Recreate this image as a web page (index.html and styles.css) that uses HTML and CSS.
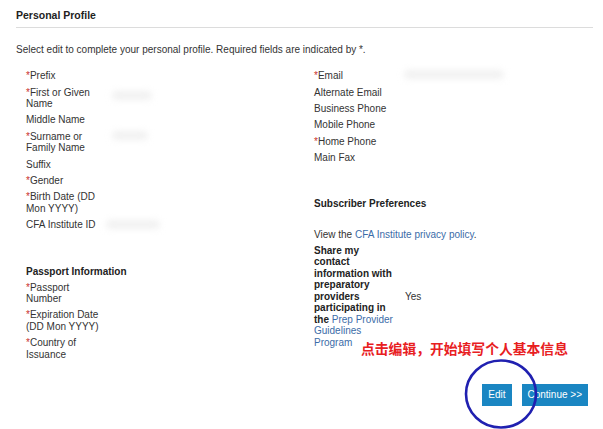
FILE: index.html
```html
<!DOCTYPE html>
<html lang="en">
<head>
<meta charset="utf-8">
<title>Personal Profile</title>
<link rel="stylesheet" href="styles.css">
</head>
<body>
<div class="page">
  <h1 class="title">Personal Profile</h1>
  <p class="intro">Select edit to complete your personal profile. Required fields are indicated by *.</p>

  <div class="columns">
    <div class="col col-left">
      <div class="fields">
        <div class="row"><div class="label req">Prefix</div><div class="value"></div></div>
        <div class="row"><div class="label req">First or Given Name</div><div class="value"><span class="smudge smudge-name"></span></div></div>
        <div class="row"><div class="label">Middle Name</div><div class="value"></div></div>
        <div class="row"><div class="label req">Surname or Family Name</div><div class="value"><span class="smudge smudge-surname"></span></div></div>
        <div class="row"><div class="label">Suffix</div><div class="value"></div></div>
        <div class="row"><div class="label req">Gender</div><div class="value"></div></div>
        <div class="row"><div class="label req">Birth Date (DD Mon YYYY)</div><div class="value"></div></div>
        <div class="row"><div class="label">CFA Institute ID</div><div class="value"><span class="smudge smudge-id"></span></div></div>
      </div>

      <h2 class="section section-passport">Passport Information</h2>
      <div class="fields">
        <div class="row"><div class="label req">Passport Number</div><div class="value"></div></div>
        <div class="row"><div class="label req">Expiration Date (DD Mon YYYY)</div><div class="value"></div></div>
        <div class="row"><div class="label req">Country of Issuance</div><div class="value"></div></div>
      </div>
    </div>

    <div class="col col-right">
      <div class="fields fields-contact">
        <div class="row"><div class="label req">Email</div><div class="value"><span class="smudge smudge-email"></span></div></div>
        <div class="row"><div class="label">Alternate Email</div><div class="value"></div></div>
        <div class="row"><div class="label">Business Phone</div><div class="value"></div></div>
        <div class="row"><div class="label">Mobile Phone</div><div class="value"></div></div>
        <div class="row"><div class="label req">Home Phone</div><div class="value"></div></div>
        <div class="row"><div class="label">Main Fax</div><div class="value"></div></div>
      </div>

      <h2 class="section section-subscriber">Subscriber Preferences</h2>
      <p class="privacy">View the <a class="link" href="#">CFA Institute privacy policy</a>.</p>
      <div class="share">
        <div class="share-label"><span>Share my contact information with preparatory providers participating in</span> <span>the</span> <a class="link" href="#"><span>Prep Provider</span> <span>Guidelines</span> <span>Program</span></a></div>
        <div class="share-value">Yes</div>
      </div>
    </div>
  </div>

  <div class="actions">
    <button class="btn" type="button">Edit</button>
    <button class="btn" type="button">Continue &gt;&gt;</button>
  </div>

  <div class="annotation">点击编辑，开始填写个人基本信息</div>
  <svg class="circle" width="80" height="76" viewBox="0 0 80 76" aria-hidden="true">
    <ellipse cx="40" cy="38" rx="35" ry="33.5" fill="none" stroke="#2020b0" stroke-width="2.6"/>
  </svg>
</div>
</body>
</html>
```

FILE: styles.css
```css
html, body {
  margin: 0;
  padding: 0;
  background: #ffffff;
}

body {
  font-family: "Liberation Sans", Arial, sans-serif;
  font-size: 10px;
  color: #333333;
  overflow: hidden;
}

.page {
  position: relative;
  width: 603px;
  height: 429px;
}

.title {
  margin: 0 10px 0 16px;
  padding: 9px 0 6px 0;
  font-size: 10.5px;
  line-height: 12px;
  font-weight: bold;
  color: #222222;
  border-bottom: 1px solid #dcdcdc;
}

.intro {
  margin: 16px 0 12px 16px;
  line-height: 12px;
  color: #333333;
}

.columns {
  display: grid;
  grid-template-columns: 288px 1fr;
  padding-left: 26px;
}

.fields {
  display: flex;
  flex-direction: column;
}

.row {
  display: grid;
  grid-template-columns: 76px 1fr;
  column-gap: 10px;
  padding: 2.4px 0;
  line-height: 11.5px;
}

.fields-contact .row {
  grid-template-columns: 80px 1fr;
}

.label.req::before {
  content: "*";
  color: #c9302c;
}

.value {
  position: relative;
}

.smudge {
  display: block;
  height: 9px;
  margin-top: 3px;
  background: #f1f1f1;
  border-radius: 5px;
  filter: blur(3px);
}

.smudge-name { width: 40px; margin-top: 4px; }
.smudge-surname { width: 36px; margin-top: 0; }
.smudge-id { width: 54px; margin-left: -6px; margin-top: 1px; }
.smudge-email { width: 100px; margin-top: 0; }

.section {
  margin: 0;
  font-size: 10px;
  line-height: 11.5px;
  font-weight: bold;
  color: #222222;
}

.section-passport {
  margin-top: 33px;
  margin-bottom: 2px;
}

.section-subscriber {
  margin-top: 32.5px;
}

.privacy {
  margin: 19.5px 0 2px 0;
  line-height: 11.5px;
}

.link {
  color: #3b6ca8;
  text-decoration: none;
  font-weight: normal;
}

.share {
  display: grid;
  grid-template-columns: 80.5px 1fr;
  column-gap: 10.5px;
  align-items: center;
  padding: 2.2px 0;
}

.share-label {
  font-weight: bold;
  line-height: 11.5px;
  color: #222222;
}

.share-value {
  line-height: 11.5px;
}

.actions {
  display: flex;
  justify-content: flex-end;
  gap: 10px;
  margin: 21px 15px 0 0;
}

.btn {
  height: 22px;
  padding: 0 6px;
  border: none;
  border-radius: 0;
  background: #1a86c2;
  color: #ffffff;
  font-family: "Liberation Sans", Arial, sans-serif;
  font-size: 10px;
  line-height: 22px;
}

.annotation {
  position: absolute;
  left: 361px;
  top: 339px;
  font-family: "Noto Sans CJK SC", "Liberation Sans", sans-serif;
  font-size: 13.8px;
  line-height: 18px;
  font-weight: bold;
  color: #e8201f;
  white-space: nowrap;
}

.circle {
  position: absolute;
  left: 461px;
  top: 356px;
}
```
